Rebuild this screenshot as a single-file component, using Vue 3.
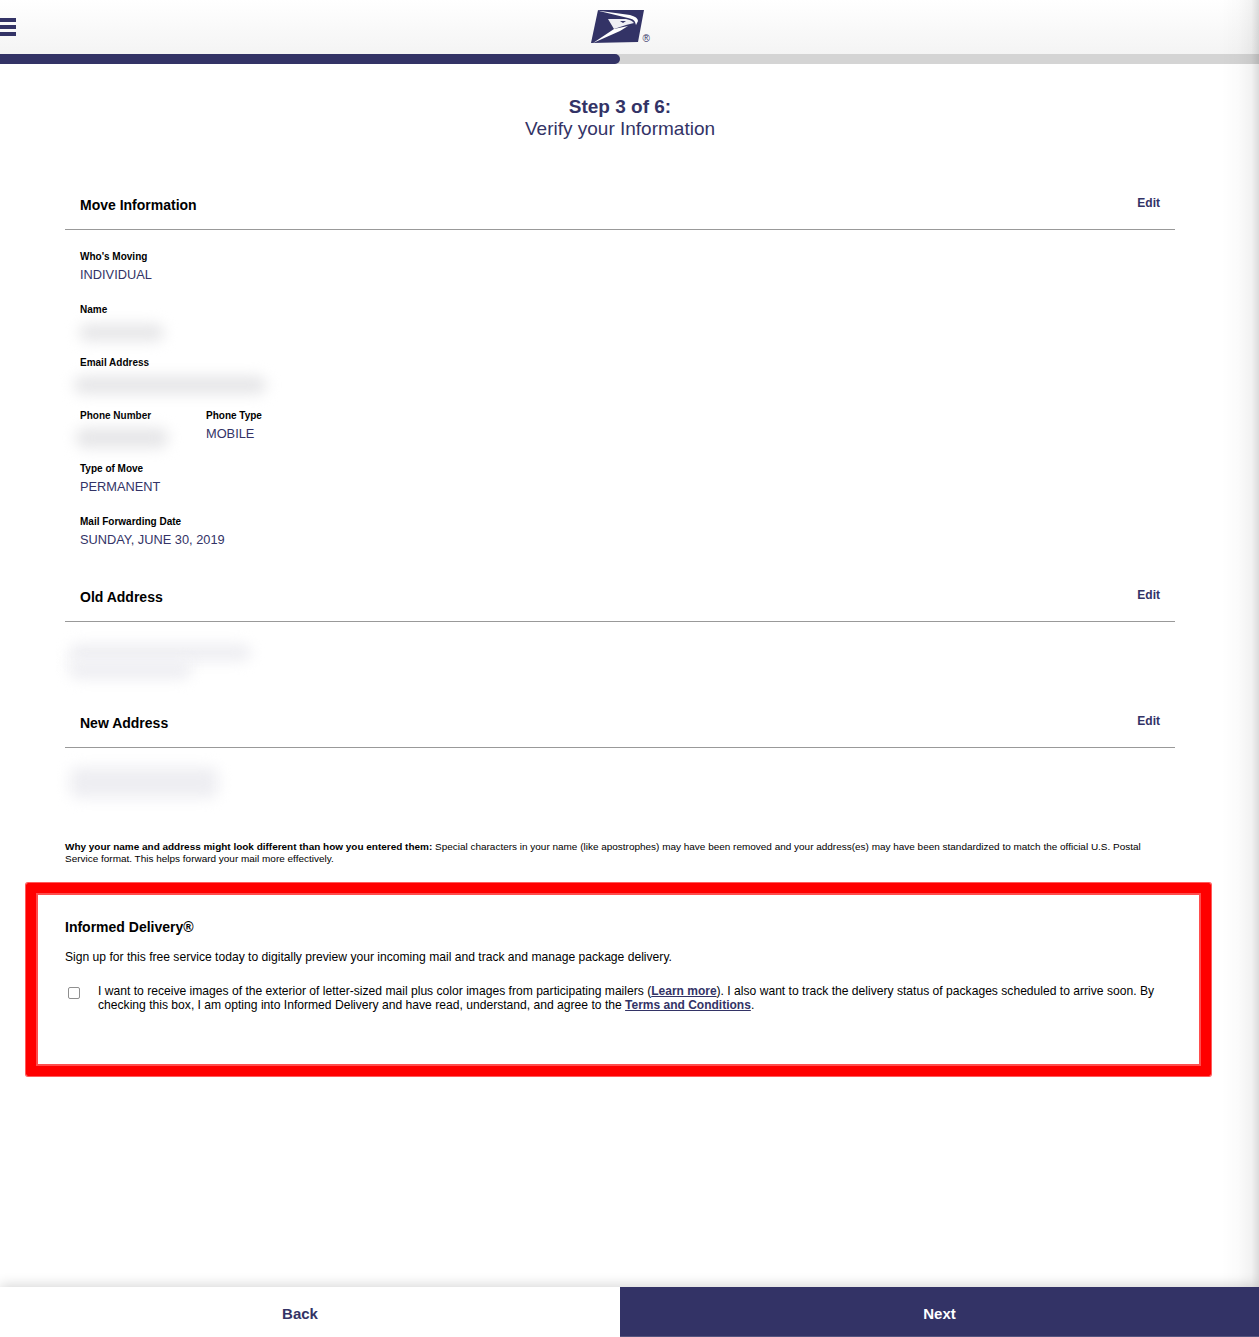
<script setup>
const moveFields = [
  { label: "Who's Moving", value: 'INDIVIDUAL' },
  { label: 'Name', blur: 'blur-name' },
  { label: 'Email Address', blur: 'blur-email' },
  { label: 'Phone Number', blur: 'blur-phone', extra: { label: 'Phone Type', value: 'MOBILE' } },
  { label: 'Type of Move', value: 'PERMANENT' },
  { label: 'Mail Forwarding Date', value: 'SUNDAY, JUNE 30, 2019' }
]
</script>

<template>
  <div class="page">
    <header class="top">
      <div class="burger"><span></span><span></span><span></span></div>
      <div class="logo">
        <svg width="60" height="36" viewBox="0 0 60 36">
          <polygon points="8,0 54,0 48,32 1,33" fill="#333366" />
          <path d="M7,0.5 L40,5 Q48,7 48,11 L46,15 L45,12 Q44,9 38,8 Z" fill="#fff" />
          <path d="M18,9 L36,9 Q42,10 44,13 L36,15 L24,19 Z" fill="#eeeef4" />
          <path d="M30,11 L36,11 L33,13 Z" fill="#333366" />
          <path d="M24,19 L38,16 L30,21 L3,33 Z" fill="#fff" />
          <text x="52.5" y="31.5" class="reg">®</text>
        </svg>
      </div>
    </header>
    <div class="progress"><div class="progress-fill"></div></div>

    <main class="content">
      <h1 class="title"><strong>Step 3 of 6:</strong><span>Verify your Information</span></h1>

      <section class="block first">
        <div class="block-head">
          <h2>Move Information</h2>
          <a class="edit">Edit</a>
        </div>
        <div class="fields">
          <div v-for="f in moveFields" :key="f.label" class="field-row">
            <div class="field">
              <div class="label">{{ f.label }}</div>
              <div v-if="f.value" class="value">{{ f.value }}</div>
              <div v-else class="value"><div class="blur" :class="f.blur"></div></div>
            </div>
            <div v-if="f.extra" class="field extra">
              <div class="label">{{ f.extra.label }}</div>
              <div class="value">{{ f.extra.value }}</div>
            </div>
          </div>
        </div>
      </section>

      <section class="block old">
        <div class="block-head">
          <h2>Old Address</h2>
          <a class="edit">Edit</a>
        </div>
        <div class="address old-address">
          <div class="blur blur-old-a"></div>
          <div class="blur blur-old-b"></div>
        </div>
      </section>

      <section class="block new">
        <div class="block-head">
          <h2>New Address</h2>
          <a class="edit">Edit</a>
        </div>
        <div class="address new-address">
          <div class="blur blur-new-a"></div>
        </div>
      </section>

      <p class="note">
        <b>Why your name and address might look different than how you entered them:</b>
        Special characters in your name (like apostrophes) may have been removed and your address(es) may have been standardized to match the official U.S. Postal Service format. This helps forward your mail more effectively.
      </p>

      <section class="informed">
        <h3>Informed Delivery®</h3>
        <p class="lead">Sign up for this free service today to digitally preview your incoming mail and track and manage package delivery.</p>
        <label class="check">
          <input type="checkbox" />
          <span>I want to receive images of the exterior of letter-sized mail plus color images from participating mailers (<a>Learn more</a>). I also want to track the delivery status of packages scheduled to arrive soon. By checking this box, I am opting into Informed Delivery and have read, understand, and agree to the <a>Terms and Conditions</a>.</span>
        </label>
      </section>
    </main>

    <footer class="bottom">
      <button class="back">Back</button>
      <button class="next">Next</button>
    </footer>

    <div class="edge"></div>
  </div>
</template>

<style>
body {
  margin: 0;
  overflow: hidden;
}
</style>

<style scoped>
.page {
  position: relative;
  width: 1259px;
  height: 1337px;
  overflow: hidden;
  display: flex;
  flex-direction: column;
  background: #fff;
  font-family: "Liberation Sans", Arial, sans-serif;
  color: #000;
}

.top {
  height: 54px;
  flex: none;
  position: relative;
  background: linear-gradient(#ffffff, #f4f4f4);
}

.burger {
  position: absolute;
  left: 0;
  top: 18px;
  width: 16px;
  display: flex;
  flex-direction: column;
  gap: 3px;
}

.burger span {
  height: 4px;
  background: #333366;
}

.logo {
  position: absolute;
  left: 590px;
  top: 10px;
}

.logo svg {
  display: block;
  overflow: visible;
}

.reg {
  font-size: 10px;
  fill: #333366;
  font-family: "Liberation Sans", Arial, sans-serif;
}

.progress {
  height: 10px;
  flex: none;
  background: #d4d4d4;
}

.progress-fill {
  width: 620px;
  height: 100%;
  background: #333366;
  border-radius: 0 5px 5px 0;
}

.content {
  flex: 1;
  width: 1110px;
  margin-left: 65px;
}

.title {
  margin: 32px 0 0;
  font-size: 19px;
  font-weight: normal;
  line-height: 22px;
  text-align: center;
  color: #333366;
  display: flex;
  flex-direction: column;
}

.title strong {
  font-weight: bold;
}

.block.first {
  margin-top: 45px;
}

.block.old {
  margin-top: 29px;
}

.block-head {
  display: flex;
  justify-content: space-between;
  align-items: flex-start;
  height: 45px;
  padding: 12px 15px 0;
  box-sizing: border-box;
  border-bottom: 1px solid #999;
}

.block-head h2 {
  margin: 0;
  font-size: 14px;
  line-height: 17px;
  font-weight: bold;
}

.edit {
  font-size: 12px;
  line-height: 14px;
  font-weight: bold;
  color: #333366;
  margin-top: -1px;
}

.fields {
  padding: 20px 15px 0;
}

.field-row {
  display: flex;
  height: 53px;
}

.field-row:last-child {
  height: 33px;
}

.field {
  width: 126px;
}

.field:only-child {
  width: auto;
}

.label {
  font-size: 10px;
  line-height: 13px;
  font-weight: bold;
}

.value {
  margin-top: 3px;
  font-size: 12.8px;
  line-height: 17px;
  color: #333366;
  white-space: nowrap;
}

.blur {
  background: #e6e6e8;
  filter: blur(7px);
  border-radius: 8px;
}

.blur-name {
  width: 85px;
  height: 17px;
  margin: 8px 0 0 -1px;
}

.blur-email {
  width: 192px;
  height: 18px;
  margin: 7px 0 0 -6px;
}

.blur-phone {
  width: 92px;
  height: 20px;
  margin: 6px 0 0 -4px;
}

.address {
  box-sizing: border-box;
}

.old-address {
  height: 81px;
  padding-top: 22px;
}

.blur-old-a {
  width: 182px;
  height: 17px;
  margin-left: 4px;
  background: #eeeef2;
  border-radius: 8px 8px 8px 0;
}

.blur-old-b {
  width: 122px;
  height: 18px;
  margin-left: 4px;
  background: #eeeef2;
  border-radius: 0 0 8px 8px;
}

.new-address {
  height: 85px;
  padding-top: 19px;
}

.blur-new-a {
  width: 148px;
  height: 31px;
  margin-left: 5px;
  background: #eeeef2;
}

.note {
  margin: 8px 0 0;
  font-size: 9.97px;
  line-height: 12px;
}

.informed {
  margin: 18px -36px 0 -39px;
  height: 193px;
  box-sizing: border-box;
  border: 10px solid #ff0000;
  border-radius: 2px;
  padding: 26px 29px 0;
  box-shadow: 0 0 0 1px #ff5c5c, inset 0 0 0 2px #ff4d4d;
}

.informed h3 {
  margin: 0;
  font-size: 14px;
  line-height: 17px;
  font-weight: bold;
}

.lead {
  margin: 14px 0 0;
  font-size: 12.12px;
  line-height: 14px;
}

.check {
  display: flex;
  margin-top: 20px;
  font-size: 12.12px;
  line-height: 14px;
}

.check input {
  appearance: none;
  flex: none;
  box-sizing: border-box;
  width: 12px;
  height: 12px;
  margin: 3px 18px 0 3px;
  background: #fff;
  border: 1px solid #8f8f8f;
  border-radius: 2px;
}

.check a {
  color: #333366;
  font-size: 12px;
  font-weight: bold;
  text-decoration: underline;
}

.bottom {
  flex: none;
  display: flex;
  height: 50px;
  box-shadow: 0 -2px 12px rgba(0, 0, 0, 0.16);
  position: relative;
}

.bottom button {
  border: 0;
  font-family: inherit;
  font-size: 15px;
  font-weight: bold;
  height: 100%;
  padding-top: 3px;
}

.back {
  width: 620px;
  background: #fff;
  color: #333366;
  padding-right: 26px;
}

.next {
  flex: 1;
  background: #333366;
  color: #fff;
  box-shadow: inset 0 -1px 0 #55557f;
}

.edge {
  position: absolute;
  top: 0;
  right: 0;
  width: 38px;
  bottom: 50px;
  background: linear-gradient(to right, rgba(0, 0, 0, 0), rgba(0, 0, 0, 0.015) 45%, rgba(0, 0, 0, 0.05) 80%, rgba(0, 0, 0, 0.14));
  pointer-events: none;
}
</style>
